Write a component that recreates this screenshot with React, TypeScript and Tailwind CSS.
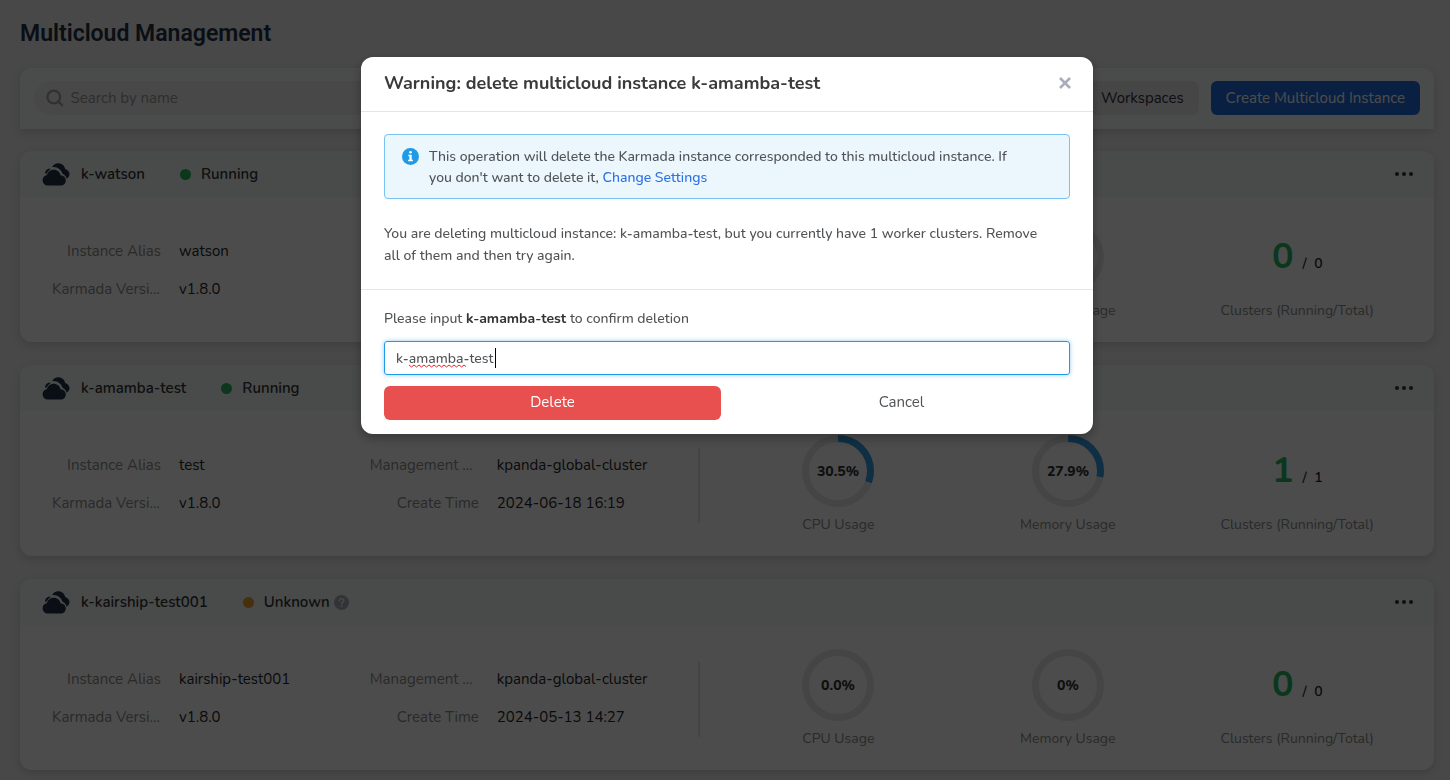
import { useState } from "react";

type Instance = {
  name: string;
  status: "Running" | "Unknown";
  alias: string;
  version: string;
  cluster: string;
  created: string;
  cpu: number;
  cpuLabel: string;
  memory: number;
  memoryLabel: string;
  running: number;
  total: number;
};

const instances: Instance[] = [
  { name: "k-watson", status: "Running", alias: "watson", version: "v1.8.0", cluster: "kpanda-global-cluster", created: "2024-06-20 10:32", cpu: 0, cpuLabel: "0.0%", memory: 0, memoryLabel: "0%", running: 0, total: 0 },
  { name: "k-amamba-test", status: "Running", alias: "test", version: "v1.8.0", cluster: "kpanda-global-cluster", created: "2024-06-18 16:19", cpu: 30.5, cpuLabel: "30.5%", memory: 27.9, memoryLabel: "27.9%", running: 1, total: 1 },
  { name: "k-kairship-test001", status: "Unknown", alias: "kairship-test001", version: "v1.8.0", cluster: "kpanda-global-cluster", created: "2024-05-13 14:27", cpu: 0, cpuLabel: "0.0%", memory: 0, memoryLabel: "0%", running: 0, total: 0 },
];

function CloudIcon() {
  return (
    <svg width="28" height="23" viewBox="0 0 28 23" fill="#1f3347" aria-hidden="true">
      <path d="M10 4.2C11.3 1.7 13.6.3 16.3.3c3.3 0 6.1 2.2 6.9 5.6 2.5.6 4.3 2.7 4.3 5.1 0 2-1.200 3.800-3 4.700-.3-2.400-1.900-4.200-4-5C19.300 6.900 15.600 4.100 11.500 4.100c-.5 0-1 0-1.500.1Z" />
      <path d="M3.200 9.200C3.700 7.300 5.300 5.900 7.600 5.500L8.700 6.200C6.900 7.100 5.600 8.500 5 10.300L3.200 10.900Z" />
      <path d="M6.100 22.600C3 22.600.6 20.300.6 17.300c0-2.600 1.800-4.700 4.300-5.200C5.700 8.900 8.400 6.700 11.700 6.700c3.500 0 6.300 2.400 6.900 5.600 2.900.1 5.200 2.300 5.200 5.100 0 2.900-2.300 5.200-5.300 5.200Z" />
    </svg>
  );
}

function Ring({ percent, text, label }: { percent: number; text: string; label: string }) {
  const c = 2 * Math.PI * 32.5;
  return (
    <div className="flex flex-col items-center gap-2">
      <svg width="72" height="72" viewBox="0 0 72 72" role="img" aria-label={label}>
        <circle cx="36" cy="36" r="32.5" fill="none" stroke="#e6e8ec" strokeWidth="7" />
        {percent > 0 && (
          <circle cx="36" cy="36" r="32.5" fill="none" stroke="#389fe6" strokeWidth="7" strokeDasharray={`${(c * percent) / 100} ${c}`} transform="rotate(-90 36 36)" />
        )}
        <text x="36" y="41" textAnchor="middle" fontSize="14" fontWeight="800" fill="#333">{text}</text>
      </svg>
      <span className="text-sm leading-5 text-[#8c8c8c]">{label}</span>
    </div>
  );
}

function Field({ label, value }: { label: string; value: string }) {
  return (
    <div className="flex gap-[18px] leading-[22px]">
      <dt className="w-[109px] shrink-0 truncate text-right text-[#8c8c8c]">{label}</dt>
      <dd className="text-[#262626]">{value}</dd>
    </div>
  );
}

function InstanceCard({ item }: { item: Instance }) {
  return (
    <article className="overflow-hidden rounded-xl bg-white pb-[21px] shadow-[0_3px_8px_rgba(0,0,0,0.14)]">
      <header className="flex h-[46px] items-center bg-[#f3faf8] pr-5 pl-[22px] font-semibold text-[#333]">
        <CloudIcon />
        <h2 className="ml-[11px]">{item.name}</h2>
        <span className={item.status === "Running" ? "ml-[35px] size-[11px] rounded-full bg-[#28b95f]" : "ml-[35px] size-[11px] rounded-full bg-[#f0a030]"} />
        <span className="ml-[10px]">{item.status}</span>
        {item.status === "Unknown" && (
          <svg className="ml-1" width="15" height="15" viewBox="0 0 15 15" aria-hidden="true">
            <circle cx="7.500" cy="7.500" r="7.500" fill="#a6abb5" />
            <path d="M5.300 5.800c0-1.300.9-2.200 2.200-2.200s2.200.8 2.200 2c0 1.500-2.100 1.600-2.100 3.300" fill="none" stroke="#f3faf8" strokeWidth="1.400" strokeLinecap="round" />
            <circle cx="7.600" cy="11.200" r=".9" fill="#f3faf8" />
          </svg>
        )}
        <button type="button" aria-label={`Actions for ${item.name}`} className="ml-auto">
          <svg width="20" height="6" viewBox="0 0 20 6" fill="#333">
            <circle cx="3" cy="3" r="2" />
            <circle cx="10" cy="3" r="2" />
            <circle cx="17" cy="3" r="2" />
          </svg>
        </button>
      </header>
      <div className="flex items-center px-[22px] pt-6">
        <dl className="grid h-[75px] w-[48%] grid-cols-2 content-center gap-y-4 border-r-2 border-[#e3e5e8] px-[10px] pb-[2px]">
          <Field label="Instance Alias" value={item.alias} />
          <Field label="Management Cluster" value={item.cluster} />
          <Field label="Karmada Version" value={item.version} />
          <Field label="Create Time" value={item.created} />
        </dl>
        <div className="grid flex-1 grid-cols-3 pl-6">
          <Ring percent={item.cpu} text={item.cpuLabel} label="CPU Usage" />
          <Ring percent={item.memory} text={item.memoryLabel} label="Memory Usage" />
          <div className="flex flex-col items-center gap-2">
            <p className="flex h-[72px] items-center gap-[9px] font-semibold text-[#262626]">
              <span className="text-4xl font-bold text-[#28b95f]">{item.running}</span>
              <span className="pt-[14px] text-sm">/&nbsp; {item.total}</span>
            </p>
            <span className="text-sm leading-5 text-[#8c8c8c]">Clusters (Running/Total)</span>
          </div>
        </div>
      </div>
    </article>
  );
}

function DeleteDialog() {
  const [value, setValue] = useState("k-amamba-test");
  return (
    <div className="fixed inset-0 flex items-start justify-center bg-black/70 pt-[57px] pr-4 pl-5">
      <section role="dialog" aria-modal="true" aria-labelledby="dialog-title" className="w-full max-w-[732px] rounded-xl bg-white text-sm font-medium text-[#505356] shadow-[0_4px_12px_rgba(0,0,0,0.3)]">
        <header className="flex h-[55px] items-center justify-between border-b border-[#e4e6e9] pr-[22px] pb-[3px] pl-[23px]">
          <h2 id="dialog-title" className="text-lg font-bold text-[#3a3a3a]">Warning: delete multicloud instance k-amamba-test</h2>
          <button type="button" aria-label="Close">
            <svg width="12" height="12" viewBox="0 0 12 12" fill="none" stroke="#a8aeb9" strokeWidth="2.600">
              <path d="m1 1 10 10M11 1 1 11" />
            </svg>
          </button>
        </header>
        <div className="border-b border-[#e4e6e9] px-[23px] pt-[22px] pb-[22px]">
          <div className="flex gap-[10px] rounded border border-[#78c2f1] bg-[#ebf6fd] pt-[11px] pr-9 pb-[10px] pl-[17px]">
            <svg className="mt-[2px] shrink-0" width="17" height="17" viewBox="0 0 17 17" aria-hidden="true">
              <circle cx="8.500" cy="8.500" r="8.500" fill="#1f9ae8" />
              <circle cx="8.500" cy="4.300" r="1.300" fill="#fff" />
              <path d="M6.300 6.700h3.400v5h1.200v1.500H6.100v-1.500h1.300V8.200H6.300Z" fill="#fff" />
            </svg>
            <p className="leading-[21px]">
              This operation will delete the Karmada instance corresponded to this multicloud instance. If you don't want to delete it, <a href="#settings" className="text-[#2b70e4]">Change Settings</a>
            </p>
          </div>
          <p className="mt-6 pr-5 leading-[22px]">You are deleting multicloud instance: k-amamba-test, but you currently have 1 worker clusters. Remove all of them and then try again.</p>
        </div>
        <form className="px-[23px] pt-[18px] pb-[14px]" onSubmit={(e) => e.preventDefault()}>
          <label htmlFor="confirm-name" className="block leading-[22px]">
            Please input <strong className="font-bold text-[#333]">k-amamba-test</strong> to confirm deletion
          </label>
          <div className="relative mt-[11px]">
            <input id="confirm-name" value={value} onChange={(e) => setValue(e.target.value)} spellCheck={false} className="h-[34px] w-full rounded-[3px] border border-[#1f9ae8] px-[11px] shadow-[0_0_4px_rgba(31,154,232,0.5)] outline-none" />
            <svg className="absolute top-[23px] left-[25px]" width="57" height="4" viewBox="0 0 57 4" fill="none" stroke="#f02020" aria-hidden="true">
              <path d="M0 1l2.500 2L5 1l2.500 2L10 1l2.500 2L15 1l2.500 2L20 1l2.500 2L25 1l2.500 2L30 1l2.500 2L35 1l2.500 2L40 1l2.500 2L45 1l2.500 2L50 1l2.500 2L55 1l2 1.600" />
            </svg>
            <span className="absolute top-[7px] left-[111px] h-5 w-px bg-black" />
          </div>
          <div className="mt-[11px] grid grid-cols-2 gap-3 text-[15px] font-normal">
            <button type="submit" className="h-[34px] rounded-md bg-[#e84f4f] text-white">Delete</button>
            <button type="button" className="h-[34px] rounded-md">Cancel</button>
          </div>
        </form>
      </section>
    </div>
  );
}

export default function App() {
  return (
    <div className="h-screen overflow-hidden bg-[#f0f0f1] font-['Nunito','Open_Sans',sans-serif] text-[15px]">
      <main className="pt-[19px] pr-4 pl-5">
        <h1 className="font-['Roboto',sans-serif] text-[23px] leading-[30px] font-semibold text-[#1f3347]">Multicloud Management</h1>
        <div className="mt-[19px] flex h-[61px] items-center gap-3 rounded-t-xl bg-[#f9fdfb] px-[14px] pb-px shadow-[0_3px_8px_rgba(0,0,0,0.14)]">
          <label className="flex h-[34px] flex-1 items-center gap-[7px] rounded-full bg-[#f0f1f4] pl-3">
            <svg width="18" height="18" viewBox="0 0 18 18" fill="none" stroke="#a0a3a8" strokeWidth="2.300" strokeLinecap="round" aria-hidden="true">
              <circle cx="8" cy="8" r="6.500" />
              <path d="m13 13 3.500 3.500" />
            </svg>
            <input type="search" aria-label="Search by name" placeholder="Search by name" className="w-full bg-transparent outline-none placeholder:text-[#9a9a9a]" />
          </label>
          <button type="button" className="h-[34px] rounded-md bg-[#e9eaee] px-[15px] text-[#333]">Workspaces</button>
          <button type="button" className="h-[34px] rounded-md bg-[#236de0] px-[15px] text-white">Create Multicloud Instance</button>
        </div>
        <div className="mt-[22px] flex flex-col gap-[23px]">
          {instances.map((item) => <InstanceCard key={item.name} item={item} />)}
        </div>
      </main>
      <DeleteDialog />
    </div>
  );
}
